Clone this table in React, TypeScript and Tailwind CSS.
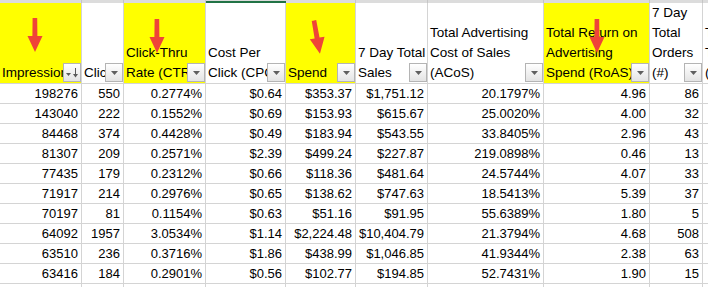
import React from "react";

interface Col {
  w: number;
  lines: string[];
  hl?: boolean;
  sort?: boolean;
  noBtn?: boolean;
}

const cols: Col[] = [
  { w: 82, lines: ["Impressions"], hl: true, sort: true },
  { w: 42, lines: ["Clicks"] },
  { w: 82, lines: ["Click-Thru", "Rate (CTR)"], hl: true },
  { w: 80, lines: ["Cost Per", "Click (CPC)"] },
  { w: 70, lines: ["Spend"], hl: true },
  { w: 72, lines: ["7 Day Total", "Sales"] },
  { w: 116, lines: ["Total Advertising", "Cost of Sales", "(ACoS)"] },
  { w: 106, lines: ["Total Return on", "Advertising", "Spend (RoAS)"], hl: true },
  { w: 53, lines: ["7 Day", "Total", "Orders", "(#)"] },
  { w: 80, lines: ["Total Units", "Total Sales", "(#)"], noBtn: true },
];

const rows: string[][] = [
  ["198276", "550", "0.2774%", "$0.64", "$353.37", "$1,751.12", "20.1797%", "4.96", "86", ""],
  ["143040", "222", "0.1552%", "$0.69", "$153.93", "$615.67", "25.0020%", "4.00", "32", ""],
  ["84468", "374", "0.4428%", "$0.49", "$183.94", "$543.55", "33.8405%", "2.96", "43", ""],
  ["81307", "209", "0.2571%", "$2.39", "$499.24", "$227.87", "219.0898%", "0.46", "13", ""],
  ["77435", "179", "0.2312%", "$0.66", "$118.36", "$481.64", "24.5744%", "4.07", "33", ""],
  ["71917", "214", "0.2976%", "$0.65", "$138.62", "$747.63", "18.5413%", "5.39", "37", ""],
  ["70197", "81", "0.1154%", "$0.63", "$51.16", "$91.95", "55.6389%", "1.80", "5", ""],
  ["64092", "1957", "3.0534%", "$1.14", "$2,224.48", "$10,404.79", "21.3794%", "4.68", "508", ""],
  ["63510", "236", "0.3716%", "$1.86", "$438.99", "$1,046.85", "41.9344%", "2.38", "63", ""],
  ["63416", "184", "0.2901%", "$0.56", "$102.77", "$194.85", "52.7431%", "1.90", "15", ""],
  ["", "", "", "", "", "", "", "", "", ""],
];

const gridCols = "grid grid-cols-[82px_42px_82px_80px_70px_72px_116px_106px_53px_80px]";

function FilterButton({ sort }: { sort?: boolean }) {
  return (
    <div className="absolute right-0 bottom-[1px] w-[18px] h-[19px] border border-[#b4b4b4] bg-gradient-to-b from-[#ffffff] to-[#e4e4e4] flex items-center justify-center">
      {sort ? (
        <svg width="14" height="12" viewBox="0 0 14 12">
          <polygon points="1,6 6,6 3.5,9" fill="#5a5a5a" />
          <rect x="10" y="1" width="1" height="8" fill="#5a5a5a" />
          <polygon points="8,7 13,7 10.5,10.5" fill="#5a5a5a" />
        </svg>
      ) : (
        <svg width="9" height="6" viewBox="0 0 9 6">
          <polygon points="1,1 8,1 4.5,5" fill="#5f5f5f" />
        </svg>
      )}
    </div>
  );
}

// hand-drawn style red marker arrow pointing down
function Arrow({ className }: { className: string }) {
  return (
    <svg width="16" height="34" viewBox="0 0 16 34" className={className}>
      <polygon points="5.6,0 10.2,0 10.4,18 15.5,18 8,34 0.5,18 5.4,18" fill="#ef4438" />
    </svg>
  );
}

export default function App() {
  return (
    <div className="relative w-[708px] h-[287px] overflow-hidden bg-white text-black font-['Liberation_Sans',Arial,sans-serif]">
      {/* column header strip */}
      <div className={`${gridCols} h-[3px] bg-[#dcdcdc]`}>
        {cols.map((c, i) => (
          <div
            key={i}
            className={i === 3 ? "border-b-2 border-[#217346]" : "border-r border-[#c6c6c6]"}
          />
        ))}
      </div>

      {/* header row */}
      <div className={`${gridCols} h-[81px]`}>
        {cols.map((c, i) => (
          <div
            key={i}
            className={
              c.hl
                ? "relative overflow-hidden bg-[#ffff00] border-r border-b border-[#d4d4d4] flex flex-col justify-end pl-[2px] text-[13.5px] leading-[20px] whitespace-nowrap"
                : "relative overflow-hidden bg-white border-r border-b border-[#d4d4d4] flex flex-col justify-end pl-[2px] text-[13.5px] leading-[20px] whitespace-nowrap"
            }
          >
            {c.lines.map((l, j) => (
              <div key={j}>{l}</div>
            ))}
            {!c.noBtn && <FilterButton sort={c.sort} />}
          </div>
        ))}
      </div>

      {/* data rows */}
      {rows.map((r, ri) => (
        <div key={ri} className={`${gridCols} h-[20px]`}>
          {r.map((v, ci) => (
            <div
              key={ci}
              className="border-r border-b border-[#d4d4d4] text-right pr-[3px] text-[13px] leading-[20px] whitespace-nowrap overflow-hidden"
            >
              {v}
            </div>
          ))}
        </div>
      ))}

      {/* red annotation arrows */}
      <Arrow className="absolute left-[27px] top-[18px]" />
      <Arrow className="absolute left-[149px] top-[19px]" />
      <Arrow className="absolute left-[309px] top-[20px] -rotate-[10deg]" />
      <Arrow className="absolute left-[589px] top-[19px]" />
    </div>
  );
}
